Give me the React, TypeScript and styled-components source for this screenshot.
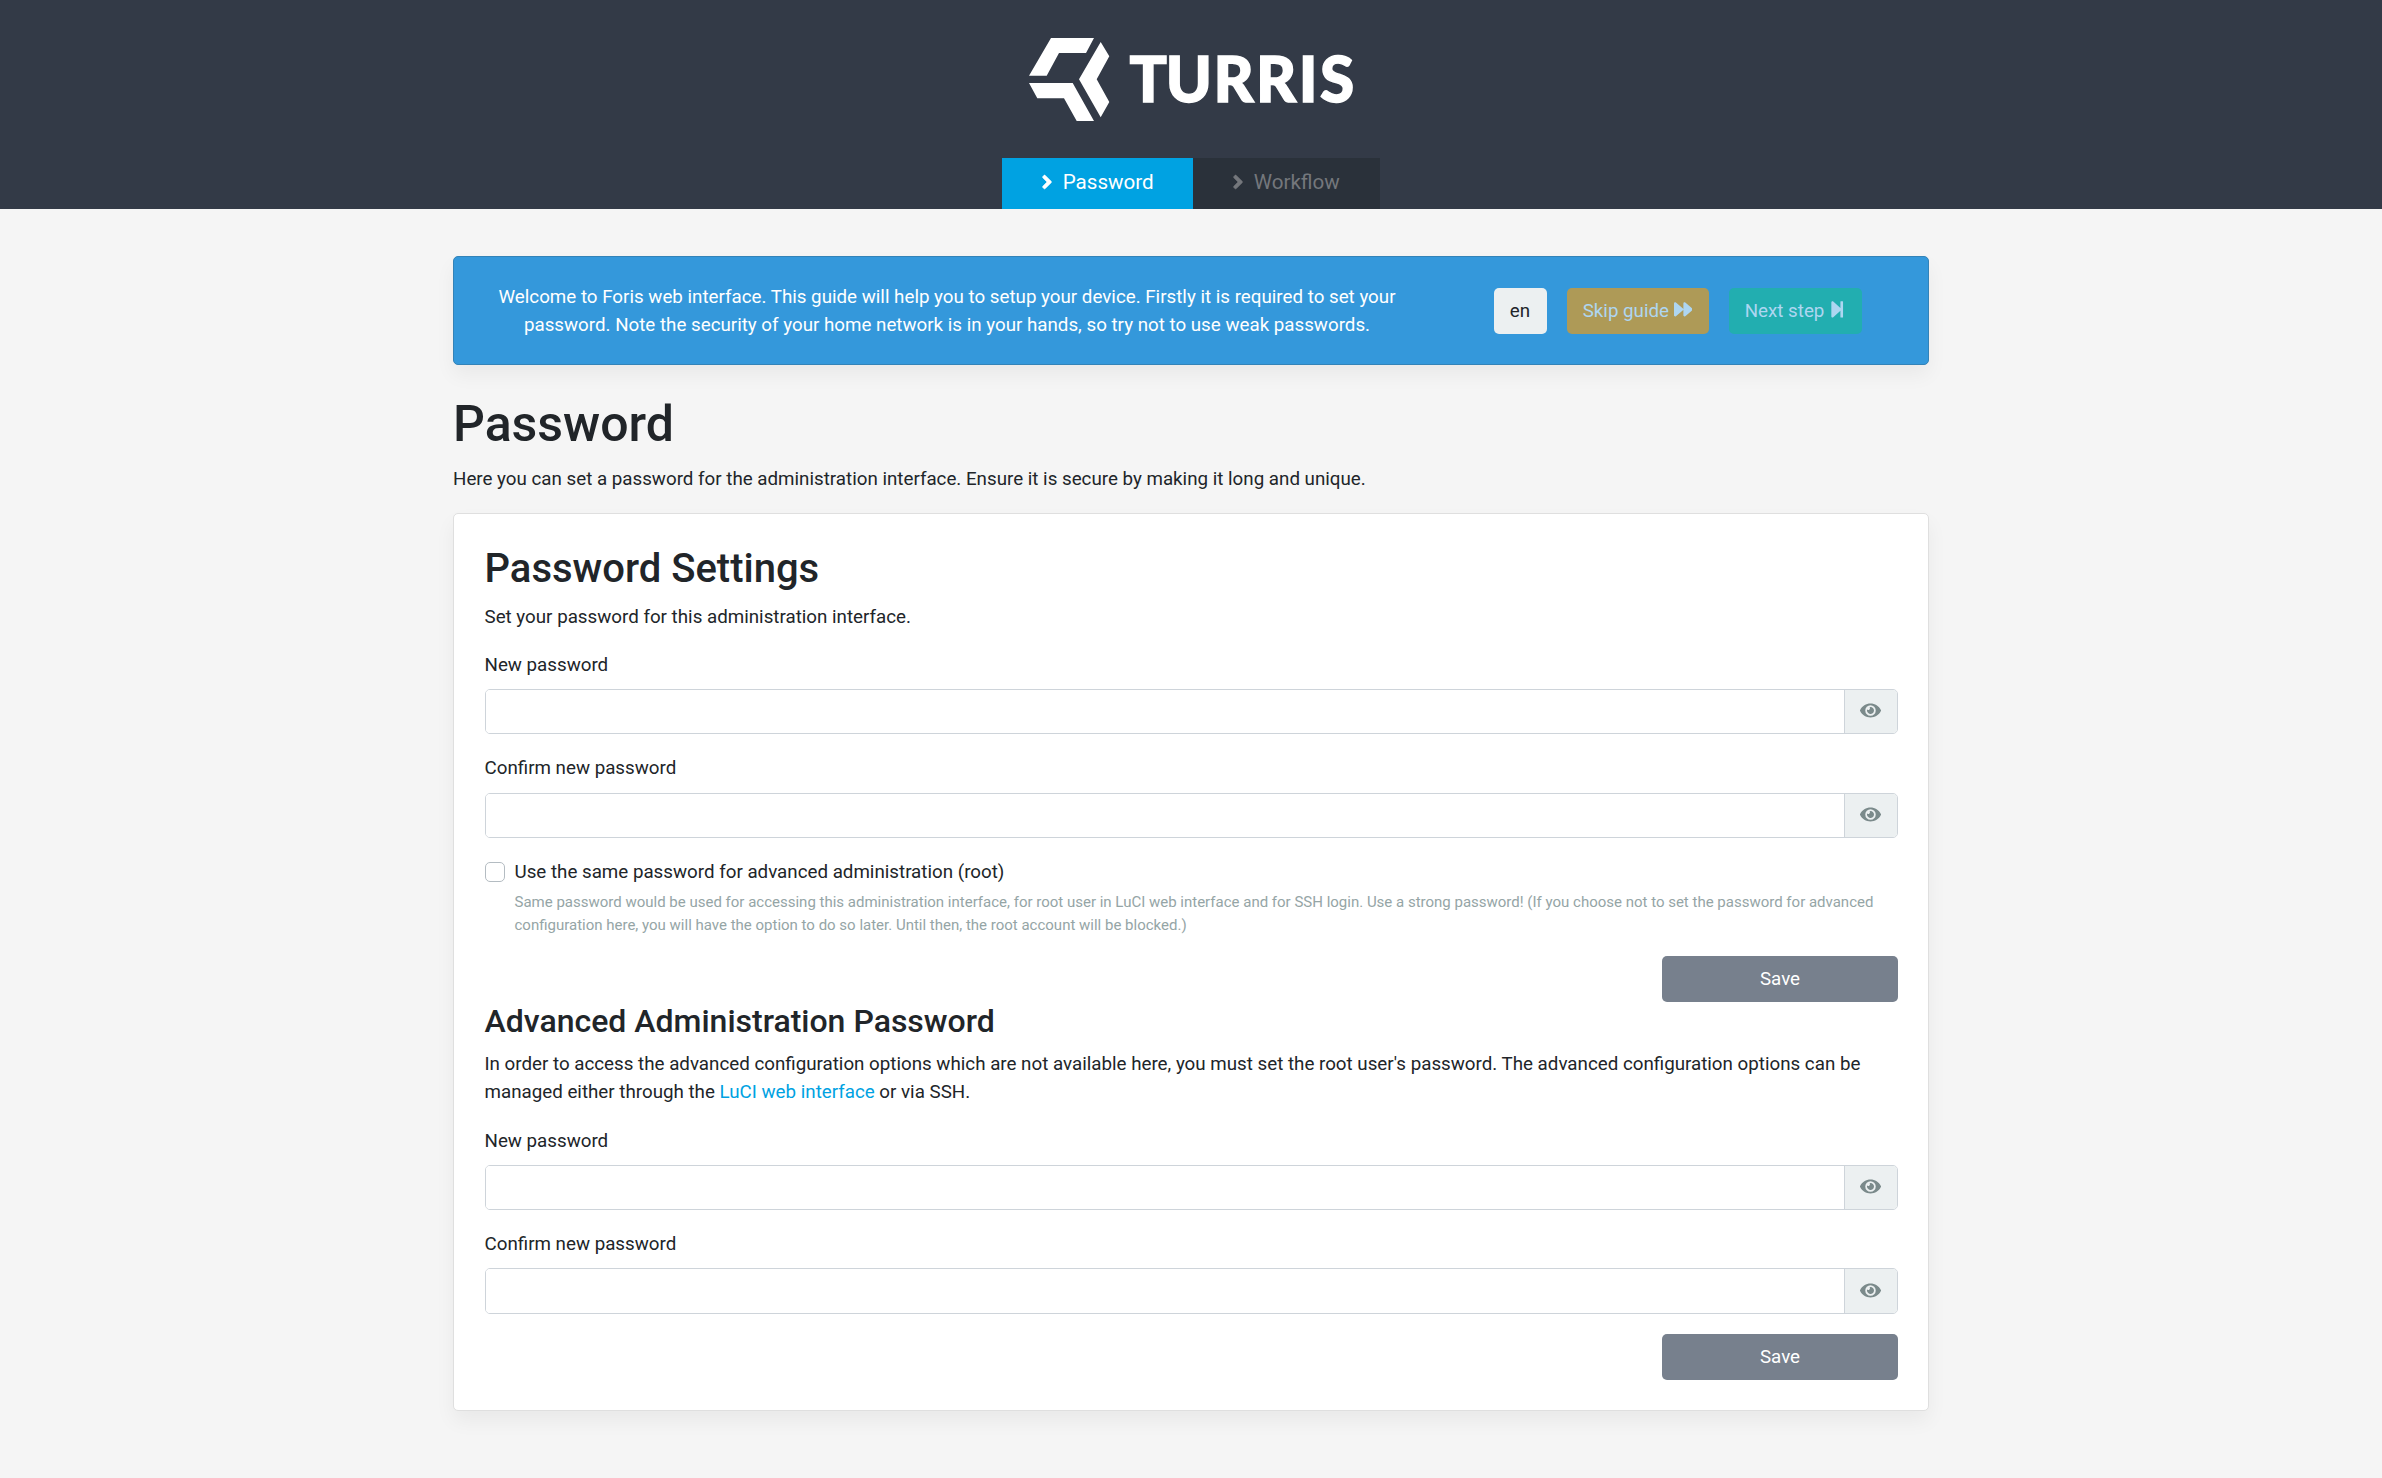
import React from "react";
import styled, { createGlobalStyle } from "styled-components";
import { FaAngleRight, FaEye, FaForward, FaStepForward } from "react-icons/fa";

const GlobalStyle = createGlobalStyle`
  *, *::before, *::after { box-sizing: border-box; }
  html { font-size: 20px; }
  body {
    margin: 0;
    min-height: 100vh;
    background: #f5f5f5;
    color: #212529;
    font-family: Roboto, "Liberation Sans", sans-serif;
    font-size: 18.75px;
    line-height: 28.125px;
  }
`;

const Header = styled.header`
  display: flex;
  flex-direction: column;
  align-items: center;
  height: 209px;
  padding-top: 37px;
  background: #333a47;
`;

const Logo = styled.svg`
  display: block;
  width: 328px;
  height: 86px;
`;

const Wordmark = styled.text`
  font-family: Lato, sans-serif;
  font-weight: 900;
  font-size: 62px;
  fill: #fff;
  stroke: #fff;
  stroke-width: 1.4px;
`;

const Tabs = styled.nav`
  display: flex;
  margin-top: auto;
`;

const Tab = styled.a<{ $active?: boolean; $width: number }>`
  display: flex;
  align-items: center;
  gap: 4.7px;
  width: ${(p) => p.$width}px;
  height: 51px;
  padding: 0 0 3px 34px;
  font-size: 20.625px;
  background: ${(p) => (p.$active ? "#00a2e2" : "#2a313a")};
  color: ${(p) => (p.$active ? "#fff" : "#74777c")};

  svg {
    width: 22px;
    height: 22px;
    stroke: currentColor;
    stroke-width: 14px;
  }
`;

const Main = styled.main`
  width: 1476px;
  margin: 47px auto 0;
`;

const Guide = styled.section`
  display: flex;
  align-items: center;
  height: 109px;
  padding: 0 7px 0 6px;
  background: #3498db;
  border: 1px solid #3383b8;
  border-radius: 5px;
  box-shadow: 0 10px 20px rgba(0, 0, 0, 0.05);
  color: #fff;
`;

const GuideText = styled.p`
  flex: 0 0 974px;
  margin: 0;
  padding: 1px 18.75px 0;
  text-align: center;
`;

const GuideActions = styled.div`
  display: flex;
  flex: 1;
  justify-content: center;
  gap: 20px;
`;

const Button = styled.button<{ $bg: string; $fg: string; $width: number; $icon?: number }>`
  display: flex;
  align-items: center;
  justify-content: center;
  gap: 4.5px;
  width: ${(p) => p.$width}px;
  height: 46px;
  padding: 1px 0 0;
  border: 0;
  border-radius: 5px;
  background: ${(p) => p.$bg};
  color: ${(p) => p.$fg};
  font: inherit;

  svg {
    width: ${(p) => p.$icon}px;
    height: 18.75px;
    margin-bottom: 4px;
  }
`;

const Title = styled.h1`
  margin: 29px 0 10.5px;
  font-size: 50px;
  font-weight: 500;
  line-height: 60px;
`;

const Lead = styled.p`
  margin: 0 0 20.6px;
`;

const Card = styled.section`
  padding: 30.6px 30px 30px 30.5px;
  background: #fff;
  border: 1px solid #dfdfdf;
  border-radius: 5px;
  box-shadow: 0 10px 20px rgba(0, 0, 0, 0.05);
`;

const SectionTitle = styled.h2`
  margin: 0 0 10px;
  font-size: 40px;
  font-weight: 500;
  line-height: 48px;
`;

const SubTitle = styled.h3`
  margin: 0 0 10px;
  font-size: 32px;
  font-weight: 500;
  line-height: 38.4px;
`;

const Text = styled.p<{ $gap?: number }>`
  margin: 0 0 ${(p) => p.$gap ?? 20}px;
`;

const Link = styled.a`
  color: #00a2e2;
`;

const Field = styled.div`
  margin-bottom: 20px;
`;

const Label = styled.label`
  display: block;
  margin-bottom: 10px;
`;

const InputGroup = styled.div`
  display: flex;
  height: 45.4px;
  border: 1px solid #ced4da;
  border-radius: 5px;
  overflow: hidden;
`;

const Input = styled.input`
  flex: 1;
  min-width: 0;
  border: 0;
  padding: 0 15px;
  background: #fff;
  font: inherit;
`;

const Reveal = styled.button`
  display: flex;
  align-items: center;
  justify-content: center;
  width: 53px;
  padding: 0 1px 2px 0;
  border: 0;
  border-left: 1px solid #ced4da;
  background: #ecf0f1;
  color: #7b8a8b;
  font-size: 21px;
`;

const CheckRow = styled.div`
  display: flex;
  gap: 10px;
`;

const Checkbox = styled.input`
  appearance: none;
  flex: none;
  width: 20px;
  height: 20px;
  margin: 4px 0 0;
  background: #fff;
  border: 1px solid #b4bcc2;
  border-radius: 5px;
`;

const Hint = styled.small`
  display: block;
  margin-top: 5px;
  font-size: 15px;
  line-height: 22.5px;
  color: #95a5a6;
`;

const Actions = styled.div<{ $top: number }>`
  display: flex;
  justify-content: flex-end;
  margin-top: ${(p) => p.$top}px;
`;

function PasswordField({ label }: { label: string }) {
  return (
    <Field>
      <Label>{label}</Label>
      <InputGroup>
        <Input type="password" />
        <Reveal type="button" aria-label="Show password">
          <FaEye />
        </Reveal>
      </InputGroup>
    </Field>
  );
}

function SaveButton({ top }: { top: number }) {
  return (
    <Actions $top={top}>
      <Button type="button" $bg="#77808d" $fg="#fff" $width={236}>
        Save
      </Button>
    </Actions>
  );
}

export default function App() {
  return (
    <>
      <GlobalStyle />
      <Header>
        <Logo viewBox="0 0 328 86" role="img" aria-label="Turris">
          <g fill="#fff">
            <path d="M24 1H67L59 16H32L19.700 38.700H2Z" />
            <path d="M2 46H45.700L67 84H49.700L37 61.300H10.300Z" />
            <path d="M73.700 5L82.300 19.300L69.700 42.300L82.300 65L73.700 80.300L52 42.300Z" />
          </g>
          <Wordmark x="102.5 138.7 186.5 229 271.800 293" y="65">
            TURRIS
          </Wordmark>
        </Logo>
        <Tabs>
          <Tab $active $width={191}>
            <FaAngleRight />
            Password
          </Tab>
          <Tab $width={187}>
            <FaAngleRight />
            Workflow
          </Tab>
        </Tabs>
      </Header>
      <Main>
        <Guide>
          <GuideText>
            Welcome to Foris web interface. This guide will help you to setup your device. Firstly it is required to set
            your password. Note the security of your home network is in your hands, so try not to use weak passwords.
          </GuideText>
          <GuideActions>
            <Button type="button" $bg="#ecf0f1" $fg="#212529" $width={53}>
              en
            </Button>
            <Button type="button" $bg="#ae9a57" $fg="#aed6f1" $width={142} $icon={18.75}>
              Skip guide <FaForward />
            </Button>
            <Button type="button" $bg="#22aeb0" $fg="#aed6f1" $width={133} $icon={16.4}>
              Next step <FaStepForward />
            </Button>
          </GuideActions>
        </Guide>
        <Title>Password</Title>
        <Lead>
          Here you can set a password for the administration interface. Ensure it is secure by making it long and
          unique.
        </Lead>
        <Card>
          <SectionTitle>Password Settings</SectionTitle>
          <Text>Set your password for this administration interface.</Text>
          <PasswordField label="New password" />
          <PasswordField label="Confirm new password" />
          <CheckRow>
            <Checkbox type="checkbox" id="same" />
            <div>
              <label htmlFor="same">Use the same password for advanced administration (root)</label>
              <Hint>
                Same password would be used for accessing this administration interface, for root user in LuCI web
                interface and for SSH login. Use a strong password! (If you choose not to set the password for advanced
                configuration here, you will have the option to do so later. Until then, the root account will be
                blocked.)
              </Hint>
            </div>
          </CheckRow>
          <SaveButton top={19.6} />
          <SubTitle>Advanced Administration Password</SubTitle>
          <Text $gap={20.4}>
            In order to access the advanced configuration options which are not available here, you must set the root
            user's password. The advanced configuration options can be managed either through the{" "}
            <Link>LuCI web interface</Link> or via SSH.
          </Text>
          <PasswordField label="New password" />
          <PasswordField label="Confirm new password" />
          <SaveButton top={0} />
        </Card>
      </Main>
    </>
  );
}
